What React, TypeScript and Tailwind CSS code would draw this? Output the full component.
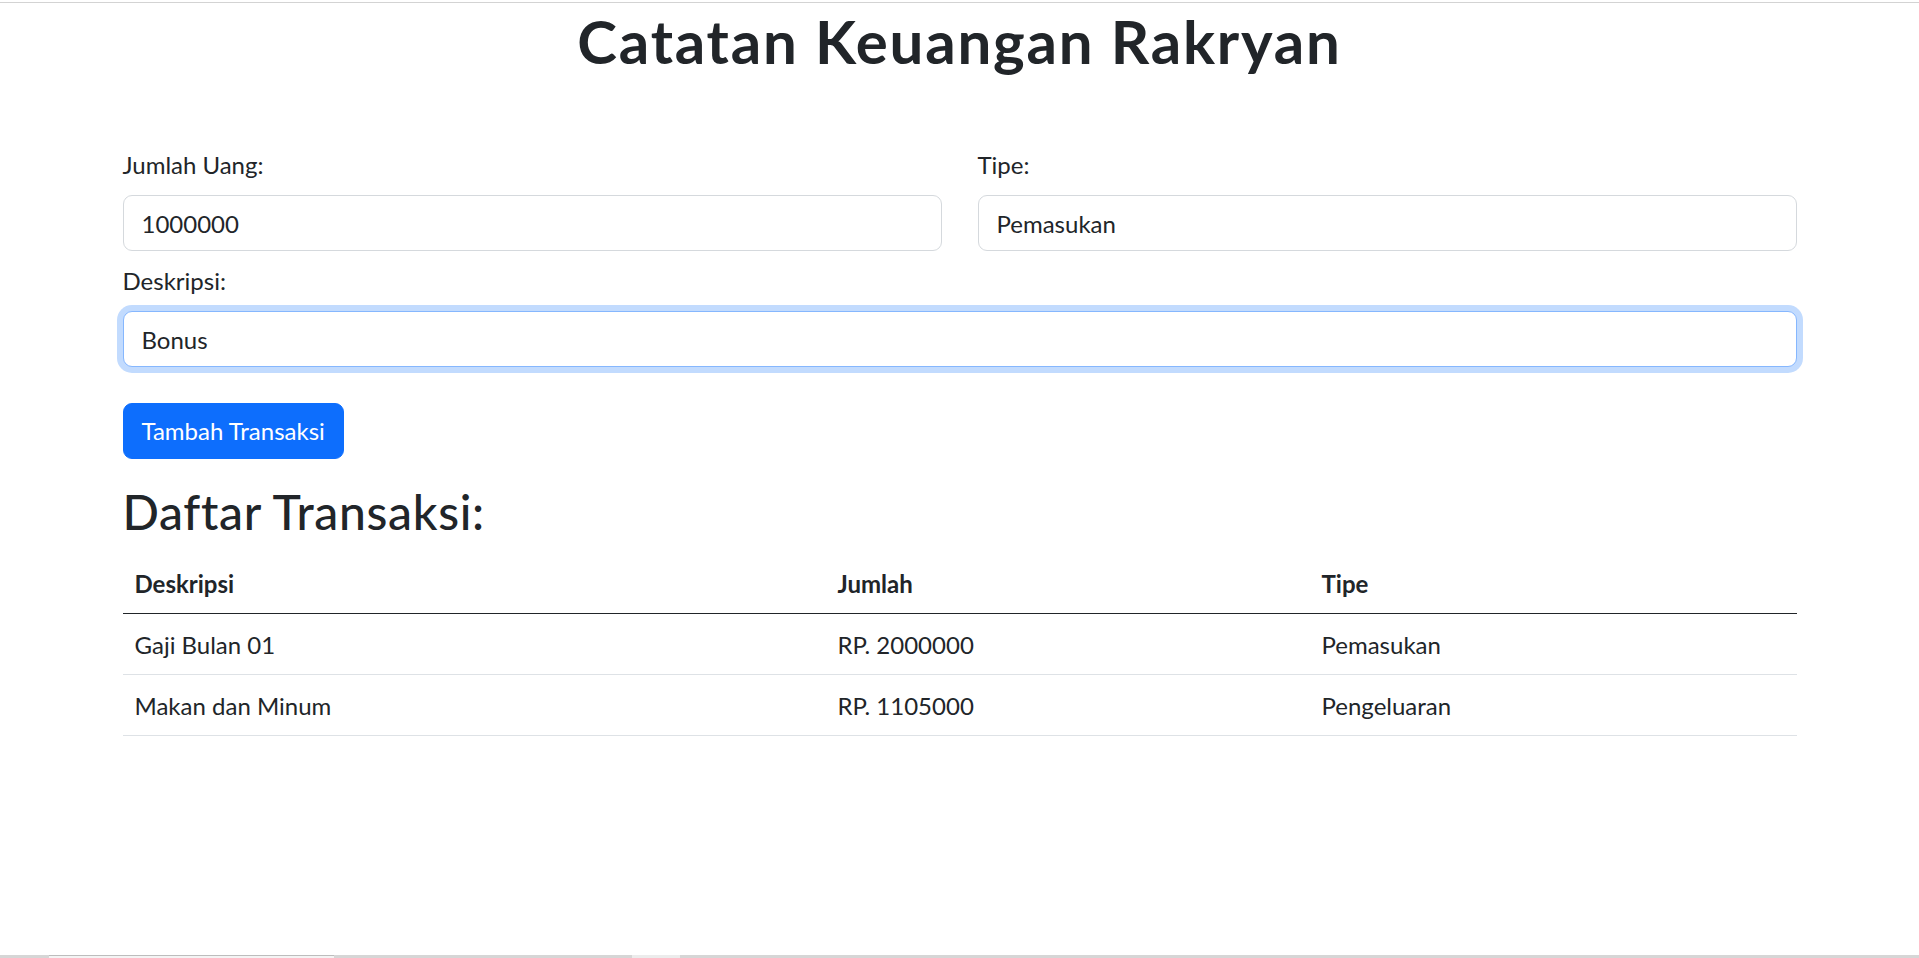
import React from 'react'

// Define types for a transaction row
interface Transaksi {
  deskripsi: string;
  jumlah: number;
  tipe: string;
}

const daftarTransaksi: Transaksi[] = [
  { deskripsi: 'Gaji Bulan 01', jumlah: 2000000, tipe: 'Pemasukan' },
  { deskripsi: 'Makan dan Minum', jumlah: 1105000, tipe: 'Pengeluaran' },
];

const inputClass =
  'block w-full h-[56px] px-[18px] text-[24px] leading-[36px] text-[#212529] bg-white border border-[#d5d9dd] rounded-[9px] outline-none';

const App = () => {
  return (
    <div className="flex h-screen flex-col bg-white font-['Lato',sans-serif] text-[#212529]">
      {/* thin browser line on top */}
      <div className="mt-[2px] h-px bg-[#d3d3d3]" />

      <div className="flex-1">
        <div className="mx-auto w-[1674px]">
          <h1 className="mt-[2px] text-center text-[60px] leading-[72px] font-bold tracking-[1.8px]">Catatan Keuangan Rakryan</h1>

          <form className="mt-[70px]" onSubmit={(e) => e.preventDefault()}>
            <div className="grid grid-cols-2 gap-x-[36px]">
              <div>
                <label htmlFor="jumlah" className="mb-[12px] block text-[24px] leading-[36px]">Jumlah Uang:</label>
                <input id="jumlah" type="text" defaultValue="1000000" className={inputClass} />
              </div>
              <div>
                <label htmlFor="tipe" className="mb-[12px] block text-[24px] leading-[36px]">Tipe:</label>
                <input id="tipe" type="text" defaultValue="Pemasukan" className={inputClass} />
              </div>
            </div>

            <div className="mt-[12px]">
              <label htmlFor="deskripsi" className="mb-[12px] block text-[24px] leading-[36px]">Deskripsi:</label>
              <input
                id="deskripsi"
                type="text"
                defaultValue="Bonus"
                className="block w-full h-[56px] px-[18px] text-[24px] leading-[36px] text-[#212529] bg-white border border-[#86b7fe] rounded-[9px] outline-none shadow-[0_0_0_6px_rgba(13,110,253,0.25)]"
              />
            </div>

            <button
              type="submit"
              className="mt-[36px] h-[56px] rounded-[9px] border border-[#0d6efd] bg-[#0d6efd] px-[18px] text-[24px] leading-[36px] text-white"
            >
              Tambah Transaksi
            </button>
          </form>

          <h2 className="mt-[24px] mb-[13px] text-[48px] leading-[57px] font-medium tracking-[0.7px]">Daftar Transaksi:</h2>

          <table className="w-full border-collapse text-[24px] leading-[36px]">
            <thead>
              <tr className="border-b border-[#212529]">
                <th className="w-[703px] px-[12px] pt-[13px] pb-[11px] text-left font-bold">Deskripsi</th>
                <th className="w-[484px] px-[12px] pt-[13px] pb-[11px] text-left font-bold">Jumlah</th>
                <th className="px-[12px] pt-[13px] pb-[11px] text-left font-bold">Tipe</th>
              </tr>
            </thead>
            <tbody>
              {daftarTransaksi.map((item, index) => (
                <tr key={index} className="border-b border-[#dee2e6]">
                  <td className="px-[12px] pt-[13px] pb-[11px]">{item.deskripsi}</td>
                  <td className="px-[12px] pt-[13px] pb-[11px]">RP. {item.jumlah}</td>
                  <td className="px-[12px] pt-[13px] pb-[11px]">{item.tipe}</td>
                </tr>
              ))}
            </tbody>
          </table>
        </div>
      </div>

      {/* bottom strip */}
      <div className="flex h-[3px] bg-[#d6d6d6]">
        <div className="ml-[49px] w-[285px] border-t border-[#bdbdbd] bg-[#f4f4f4]" />
        <div className="ml-[298px] w-[48px] bg-[#ececec]" />
      </div>
    </div>
  )
}

export default App
